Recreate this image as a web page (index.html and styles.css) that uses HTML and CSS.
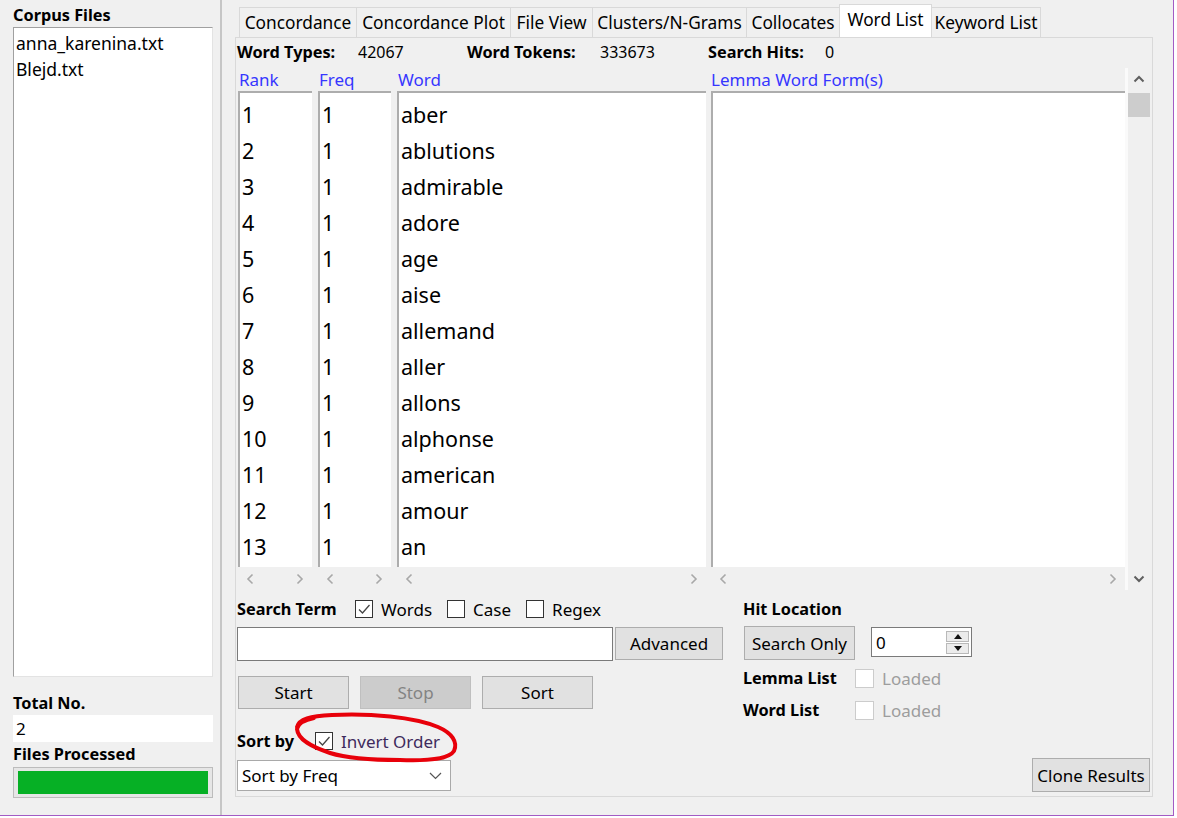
FILE: index.html
```html
<!DOCTYPE html>
<html>
<head>
<meta charset="utf-8">
<title>AntConc - Word List</title>
<link rel="stylesheet" href="styles.css">
</head>
<body>
<div class="window">
  <aside class="sidebar">
    <div class="side-title">Corpus Files</div>
    <div class="filelist">
      <div class="file">anna_karenina.txt</div>
      <div class="file">Blejd.txt</div>
    </div>
    <div class="side-label total">Total No.</div>
    <div class="count">2</div>
    <div class="side-label">Files Processed</div>
    <div class="progress"><div class="progress-fill"></div></div>
  </aside>

  <main class="main">
    <div class="tabs">
      <div class="tab t1">Concordance</div>
      <div class="tab t2">Concordance Plot</div>
      <div class="tab t3">File View</div>
      <div class="tab t4">Clusters/N-Grams</div>
      <div class="tab t5">Collocates</div>
      <div class="tab t6 active">Word List</div>
      <div class="tab t7">Keyword List</div>
    </div>

    <section class="panel">
      <div class="stats">
        <span class="stat-label s1">Word Types:</span><span class="stat-val s2">42067</span>
        <span class="stat-label s3">Word Tokens:</span><span class="stat-val s4">333673</span>
        <span class="stat-label s5">Search Hits:</span><span class="stat-val">0</span>
      </div>

      <div class="listarea">
        <div class="col col-rank">
          <div class="col-head">Rank</div>
          <div class="col-box">
            <div class="row">1</div><div class="row">2</div><div class="row">3</div><div class="row">4</div>
            <div class="row">5</div><div class="row">6</div><div class="row">7</div><div class="row">8</div>
            <div class="row">9</div><div class="row">10</div><div class="row">11</div><div class="row">12</div>
            <div class="row">13</div>
          </div>
          <div class="hscroll">
            <span class="harr"><svg width="8" height="12" viewBox="0 0 8 12"><path d="M6.5 1.5 L2 6 L6.5 10.5" fill="none" stroke="#a8a8a8" stroke-width="1.6"/></svg></span>
            <span class="harr"><svg width="8" height="12" viewBox="0 0 8 12"><path d="M1.5 1.5 L6 6 L1.5 10.5" fill="none" stroke="#a8a8a8" stroke-width="1.6"/></svg></span>
          </div>
        </div>
        <div class="col col-freq">
          <div class="col-head">Freq</div>
          <div class="col-box">
            <div class="row">1</div><div class="row">1</div><div class="row">1</div><div class="row">1</div>
            <div class="row">1</div><div class="row">1</div><div class="row">1</div><div class="row">1</div>
            <div class="row">1</div><div class="row">1</div><div class="row">1</div><div class="row">1</div>
            <div class="row">1</div>
          </div>
          <div class="hscroll">
            <span class="harr"><svg width="8" height="12" viewBox="0 0 8 12"><path d="M6.5 1.5 L2 6 L6.5 10.5" fill="none" stroke="#a8a8a8" stroke-width="1.6"/></svg></span>
            <span class="harr"><svg width="8" height="12" viewBox="0 0 8 12"><path d="M1.5 1.5 L6 6 L1.5 10.5" fill="none" stroke="#a8a8a8" stroke-width="1.6"/></svg></span>
          </div>
        </div>
        <div class="col col-word">
          <div class="col-head">Word</div>
          <div class="col-box">
            <div class="row">aber</div><div class="row">ablutions</div><div class="row">admirable</div><div class="row">adore</div>
            <div class="row">age</div><div class="row">aise</div><div class="row">allemand</div><div class="row">aller</div>
            <div class="row">allons</div><div class="row">alphonse</div><div class="row">american</div><div class="row">amour</div>
            <div class="row">an</div>
          </div>
          <div class="hscroll">
            <span class="harr"><svg width="8" height="12" viewBox="0 0 8 12"><path d="M6.5 1.5 L2 6 L6.5 10.5" fill="none" stroke="#a8a8a8" stroke-width="1.6"/></svg></span>
            <span class="harr"><svg width="8" height="12" viewBox="0 0 8 12"><path d="M1.5 1.5 L6 6 L1.5 10.5" fill="none" stroke="#a8a8a8" stroke-width="1.6"/></svg></span>
          </div>
        </div>
        <div class="col col-lemma">
          <div class="col-head">Lemma Word Form(s)</div>
          <div class="col-box"></div>
          <div class="hscroll">
            <span class="harr"><svg width="8" height="12" viewBox="0 0 8 12"><path d="M6.5 1.5 L2 6 L6.5 10.5" fill="none" stroke="#a8a8a8" stroke-width="1.6"/></svg></span>
            <span class="harr"><svg width="8" height="12" viewBox="0 0 8 12"><path d="M1.5 1.5 L6 6 L1.5 10.5" fill="none" stroke="#a8a8a8" stroke-width="1.6"/></svg></span>
          </div>
        </div>
        <div class="vscroll">
          <div class="varr"><svg width="12" height="8" viewBox="0 0 12 8"><path d="M1.5 6.5 L6 2 L10.5 6.5" fill="none" stroke="#606060" stroke-width="2"/></svg></div>
          <div class="thumb"></div>
          <div class="vtrack"></div>
          <div class="varr vdown"><svg width="12" height="8" viewBox="0 0 12 8"><path d="M1.5 1.5 L6 6 L10.5 1.5" fill="none" stroke="#606060" stroke-width="2"/></svg></div>
        </div>
      </div>

      <div class="controls">
        <div class="ctl-left">
          <div class="line">
            <span class="lbl-bold lbl-search">Search Term</span>
            <span class="check"><span class="box"><svg width="16" height="16" viewBox="0 0 16 16"><path d="M3 8.5 L6.5 12 L13.5 4" fill="none" stroke="#444" stroke-width="1.3"/></svg></span>Words</span>
            <span class="check"><span class="box"></span>Case</span>
            <span class="check"><span class="box"></span>Regex</span>
          </div>
          <div class="row-input">
            <div class="textinput"></div>
            <div class="btn btn-adv">Advanced</div>
          </div>
          <div class="row-buttons">
            <div class="btn btn-main">Start</div>
            <div class="btn btn-main btn-disabled">Stop</div>
            <div class="btn btn-main">Sort</div>
          </div>
          <div class="line row-sort">
            <span class="lbl-bold lbl-sortby">Sort by</span>
            <span class="check invert"><span class="box"><svg width="16" height="16" viewBox="0 0 16 16"><path d="M3 8.5 L6.5 12 L13.5 4" fill="none" stroke="#444" stroke-width="1.3"/></svg></span>Invert Order</span>
          </div>
          <div class="select">
            <span>Sort by Freq</span>
            <svg width="13" height="8" viewBox="0 0 13 8"><path d="M1 1 L6.5 6.5 L12 1" fill="none" stroke="#555" stroke-width="1.2"/></svg>
          </div>
        </div>

        <div class="ctl-right">
          <div class="line"><span class="lbl-bold">Hit Location</span></div>
          <div class="row-hit">
            <div class="btn btn-search">Search Only</div>
            <div class="spin">
              <span class="spin-val">0</span>
              <span class="spin-btns">
                <span class="spin-btn"><svg width="8" height="5" viewBox="0 0 8 5"><path d="M0 5 L4 0 L8 5 Z" fill="#111"/></svg></span>
                <span class="spin-btn"><svg width="8" height="5" viewBox="0 0 8 5"><path d="M0 0 L4 5 L8 0 Z" fill="#111"/></svg></span>
              </span>
            </div>
          </div>
          <div class="line row-lemma">
            <span class="lbl-bold lbl-list">Lemma List</span>
            <span class="check disabled"><span class="box"></span>Loaded</span>
          </div>
          <div class="line row-wl">
            <span class="lbl-bold lbl-list">Word List</span>
            <span class="check disabled"><span class="box"></span>Loaded</span>
          </div>
          <div class="btn btn-clone">Clone Results</div>
        </div>
      </div>
    </section>
  </main>

  <svg class="annot" width="175" height="60" viewBox="0 0 175 60">
    <path d="M7 17 C9 9 20 6 42 5 C80 3 124 7 148 17 C162 23 168 32 164 41 C159 49 141 51 110 50 C80 50 56 48 40 43 C22 37 8 30 7 19 C8 13 14 10 24 8" fill="none" stroke="#e8000a" stroke-width="4" stroke-linecap="round" stroke-linejoin="round"/>
  </svg>
</div>
</body>
</html>
```
FILE: styles.css
```css
* { box-sizing: border-box; }
html, body { margin: 0; padding: 0; }
body {
  background: #ffffff;
  width: 1177px;
  height: 818px;
  overflow: hidden;
  font-family: "Noto Sans", "Liberation Sans", sans-serif;
  font-size: 17px;
  color: #000;
}
.window {
  position: relative;
  width: 1174px;
  height: 816px;
  background: #f0f0f0;
  border-right: 1px solid #a35bc4;
  border-bottom: 1px solid #a35bc4;
  display: flex;
}

/* ---------- sidebar ---------- */
.sidebar {
  width: 222px;
  flex: none;
  padding: 0 7px 0 13px;
  border-right: 2px solid #c6c6c6;
  display: flex;
  flex-direction: column;
}
.side-title {
  font-weight: 700;
  font-size: 16.3px;
  height: 27px;
  padding-top: 4px;
  line-height: 23px;
}
.filelist {
  height: 650px;
  flex: none;
  background: #fff;
  border: 1px solid;
  border-color: #a0a0a0 #e3e3e3 #e3e3e3 #a0a0a0;
  padding: 2px 2px;
}
.file { font-size: 17.5px; line-height: 26px; white-space: nowrap; }
.side-label {
  font-weight: 700;
  font-size: 16.3px;
  line-height: 22px;
  height: 22px;
}
.total { margin-top: 15px; }
.count {
  height: 27px;
  margin: 1px 0 1px;
  background: #fff;
  line-height: 27px;
  padding-left: 3px;
  font-size: 17px;
}
.progress {
  margin-top: 2px;
  height: 31px;
  border: 1px solid #bcbcbc;
  background: #e6e6e6;
  padding: 3px 4px;
}
.progress-fill { height: 100%; background: #06b025; }

/* ---------- main ---------- */
.main {
  flex: 1;
  padding-left: 13px;
  display: flex;
  flex-direction: column;
}
.tabs {
  height: 37px;
  display: flex;
  align-items: flex-end;
  padding-left: 4px;
}
.tab {
  height: 30px;
  border: 1px solid #d9d9d9;
  border-bottom: none;
  margin-right: -1px;
  line-height: 29px;
  font-size: 17.3px;
  white-space: nowrap;
  background: #f0f0f0;
  text-align: center;
}
.t1 { width: 118px; }
.t2 { width: 155px; }
.t3 { width: 83px; }
.t4 { width: 155px; }
.t5 { width: 94px; }
.t6 { width: 93px; }
.t7 { width: 110px; }
.tab.active {
  height: 33px;
  background: #fff;
  position: relative;
  z-index: 1;
}
.panel {
  width: 918px;
  height: 760px;
  border: 1px solid #d9d9d9;
  padding: 2px 0 0 1px;
  display: flex;
  flex-direction: column;
}
.stats {
  height: 24px;
  display: flex;
  align-items: center;
  font-size: 16px;
  line-height: 24px;
  white-space: nowrap;
}
.stat-label { font-weight: 700; font-size: 16.3px; }
.s1 { width: 121px; }
.s2 { width: 109px; }
.s3 { width: 133px; }
.s4 { width: 108px; }
.s5 { width: 117px; }

.listarea {
  display: flex;
  height: 522px;
  margin-top: 4px;
  padding-left: 1px;
  flex: none;
}
.col { display: flex; flex-direction: column; }
.col-rank { width: 74px; margin-right: 6px; }
.col-freq { width: 73px; margin-right: 6px; }
.col-word { width: 309px; margin-right: 5px; }
.col-lemma { width: 414px; }
.col-head {
  height: 23px;
  line-height: 23px;
  color: #3636ff;
  font-size: 17px;
  padding-left: 1px;
  white-space: nowrap;
}
.col-lemma .col-head { padding-left: 0; }
.col-box {
  height: 476px;
  background: #fff;
  border-top: 2px solid #adadad;
  border-left: 2px solid #adadad;
  padding: 4px 0 0 2px;
  overflow: hidden;
}
.row {
  height: 36px;
  line-height: 36px;
  font-size: 21.5px;
  white-space: nowrap;
}
.hscroll {
  height: 23px;
  display: flex;
  justify-content: space-between;
  align-items: center;
}
.harr { width: 24px; height: 14px; display: flex; justify-content: center; align-items: center; }
.vscroll {
  width: 27px;
  border-left: 3px solid #fafafa;
  padding-right: 2px;
  display: flex;
  flex-direction: column;
}
.varr { height: 22px; display: flex; align-items: center; justify-content: center; }
.vdown { height: 23px; }
.thumb { height: 24px; margin-top: 3px; background: #cdcdcd; }
.vtrack { flex: 1; }

/* ---------- controls ---------- */
.controls {
  display: flex;
  margin-top: 8px;
  flex: 1;
}
.ctl-left { width: 506px; display: flex; flex-direction: column; }
.ctl-right {
  flex: 1;
  display: flex;
  flex-direction: column;
  padding: 0 2px 4px 0;
}
.line {
  height: 22px;
  display: flex;
  align-items: center;
  white-space: nowrap;
}
.lbl-bold { font-weight: 700; font-size: 16.3px; }
.lbl-search { width: 118px; flex: none; }
.lbl-sortby { width: 78px; flex: none; }
.check {
  display: flex;
  align-items: center;
  gap: 8px;
  margin-right: 15px;
  font-size: 17px;
}
.box {
  width: 18px;
  height: 18px;
  border: 1px solid #333;
  background: #fff;
  display: flex;
  align-items: center;
  justify-content: center;
}
.check.disabled { color: #9d9d9d; }
.check.disabled .box { border-color: #cccccc; width: 19px; height: 19px; }
.invert { color: #3e2a5c; }

.row-input { display: flex; margin-top: 7px; height: 34px; }
.textinput {
  width: 376px;
  height: 34px;
  background: #fff;
  border: 1px solid #7a7a7a;
}
.btn {
  background: #e1e1e1;
  border: 1px solid #adadad;
  font-size: 17px;
  display: flex;
  align-items: center;
  justify-content: center;
  white-space: nowrap;
}
.btn-adv { width: 108px; height: 33px; margin-left: 2px; }
.row-buttons {
  display: flex;
  gap: 11px;
  margin-top: 15px;
  padding-left: 1px;
}
.btn-main { width: 111px; height: 33px; }
.btn-disabled { background: #cccccc; border-color: #bfbfbf; color: #838383; }
.row-sort { margin-top: 21px; }
.select {
  margin-top: 8px;
  width: 214px;
  height: 31px;
  background: #fff;
  border: 1px solid #a9a9a9;
  display: flex;
  align-items: center;
  justify-content: space-between;
  padding: 0 8px 0 4px;
  font-size: 17px;
}

.row-hit { display: flex; align-items: flex-start; margin-top: 6px; }
.btn-search { width: 111px; height: 34px; margin-left: 1px; }
.spin {
  margin: 1px 0 0 16px;
  width: 101px;
  height: 30px;
  background: #fff;
  border: 1px solid #7a7a7a;
  display: flex;
  align-items: center;
  justify-content: space-between;
  padding: 0 2px 0 4px;
}
.spin-val { font-size: 17px; }
.spin-btns { display: flex; flex-direction: column; gap: 1px; }
.spin-btn {
  width: 23px;
  height: 11px;
  background: #ececec;
  border: 1px solid #b9b9b9;
  display: flex;
  align-items: center;
  justify-content: center;
}
.lbl-list { width: 112px; flex: none; }
.row-lemma { margin-top: 7px; }
.row-wl { margin-top: 10px; }
.btn-clone {
  margin-top: auto;
  align-self: flex-end;
  width: 118px;
  height: 34px;
}

.annot {
  position: absolute;
  left: 290px;
  top: 710px;
}
```
